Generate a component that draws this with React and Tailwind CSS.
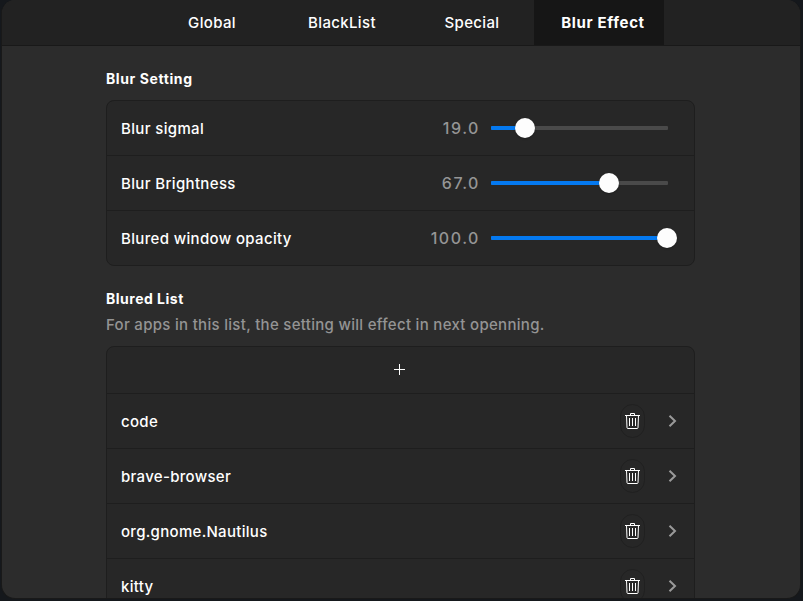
const tabs = ['Global', 'BlackList', 'Special', 'Blur Effect'];

const sliders = [
  { label: 'Blur sigmal', value: '19.0', fill: 34 },
  { label: 'Blur Brightness', value: '67.0', fill: 118 },
  { label: 'Blured window opacity', value: '100.0', fill: 176 },
];

const apps = ['code', 'brave-browser', 'org.gnome.Nautilus', 'kitty'];

function Trash() {
  return (
    <svg className="block h-4 w-[15px]" viewBox="0 0 15 16" fill="none" stroke="#fff">
      <path d="M0 2.5H15" />
      <path d="M5.5 2.5V0.5H9.5V2.5" />
      <path d="M1.5 2.5L2 14.7Q2.1 15.5 3 15.5H12Q12.9 15.5 13 14.7L13.5 2.5" />
      <path d="M4.5 5V13M7.5 5V13M10.5 5V13" />
    </svg>
  );
}

function Slider({ fill }) {
  return (
    <div className="relative h-1 w-[177px] rounded-[1px] bg-[#4a4a4a]">
      <div className="h-1 rounded-[1px] bg-[#0479f0]" style={{ width: fill }} />
      <div
        className="absolute -top-2 size-5 rounded-full bg-[#fdfdfd] shadow-[0_1px_2px_rgba(0,0,0,0.25)]"
        style={{ left: fill - 10 }}
      />
    </div>
  );
}

export default function App() {
  return (
    <div className="h-[601px] w-[803px] overflow-hidden bg-[#15181c] pr-0.5 pl-px font-['Inter',sans-serif] text-[15px] text-white">
      <div className="flex h-[599px] flex-col overflow-hidden rounded-[14px] border border-t-0 border-[#191919] bg-[#2c2c2c]">
        <header className="flex h-[46px] shrink-0 border-b border-[#191919] bg-[#222222] pl-[142px]">
          {tabs.map((t, i) => (
            <div
              key={t}
              className={
                'flex w-[130px] items-center justify-center pt-[2px] ' +
                (i === 3 ? 'bg-[#161616] pl-2 font-bold tracking-[0.65px]' : 'pl-[6px] font-medium tracking-[0.35px]')
              }
            >
              {t}
            </div>
          ))}
        </header>
        <main className="flex w-[693px] flex-col pl-[104px]">
          <h2 className="mt-[23px] h-5 text-[14px] leading-5 font-bold tracking-[0.6px]">Blur Setting</h2>
          <section className="mt-[11px] rounded-[8px] border border-[#1e1e1e] bg-[#272727]">
            {sliders.map((s, i) => (
              <div
                key={s.label}
                className={'flex items-center pr-[26px] pl-[14px] ' + (i < 2 ? 'h-[55px] border-b border-[#1e1e1e]' : 'h-[54px]')}
              >
                <span className="flex-1 pt-[2px] font-medium tracking-[0.35px]">{s.label}</span>
                <span className="mr-[11px] text-[16px] leading-6 font-medium tracking-[1.55px] text-[#959595]">{s.value}</span>
                <Slider fill={s.fill} />
              </div>
            ))}
          </section>
          <h2 className="mt-[23px] h-5 text-[14px] leading-5 font-bold tracking-[0.5px]">Blured List</h2>
          <p className="mt-[6px] h-5 leading-5 font-medium tracking-[0.3px] text-[#949494]">
            For apps in this list, the setting will effect in next openning.
          </p>
          <section className="mt-[11px] rounded-t-[8px] border border-[#1e1e1e] bg-[#272727]">
            <div className="flex h-[47px] items-center justify-center border-b border-[#1e1e1e] pr-[2px] pb-[1px]">
              <svg className="block size-[11px]" viewBox="0 0 11 11" stroke="#fff">
                <path d="M0 5.5H11M5.5 0V11" />
              </svg>
            </div>
            {apps.map((a) => (
              <div key={a} className="flex h-[55px] items-center border-b border-[#1e1e1e] pr-[17px] pl-[14px]">
                <span className="flex-1 pt-[2px] font-medium tracking-[0.3px]">{a}</span>
                <div className="mr-[23px] flex h-[34px] w-[25px] items-center justify-center rounded-full border border-[#202020]">
                  <Trash />
                </div>
                <svg className="block h-3 w-[9px]" viewBox="0 0 9 12" fill="none" stroke="#9a9a9a" strokeWidth="2">
                  <path d="M1.5 0.7L7 6L1.5 11.3" />
                </svg>
              </div>
            ))}
          </section>
        </main>
      </div>
    </div>
  );
}
